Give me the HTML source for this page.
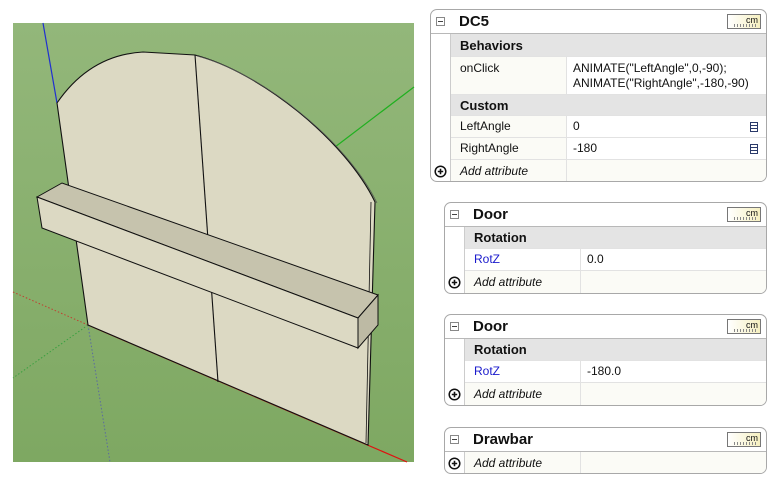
<!DOCTYPE html>
<html><head><meta charset="utf-8"><style>
*{margin:0;padding:0;box-sizing:border-box}
body{width:778px;height:485px;background:#fff;position:relative;overflow:hidden;font-family:"Liberation Sans",Arial,sans-serif;font-size:12px;color:#111}
.p{position:absolute;border:1px solid #a8a8a8;border-radius:7px;background:#fff;overflow:hidden}
.r{position:absolute;left:20px;right:0;border-bottom:1px solid #e2e2e2}
.hd{position:absolute;left:0;right:0;top:0;border-bottom:1px solid #b8b8b8}
.t{position:absolute;left:28px;font-weight:bold;font-size:15px}
.g{background:#e4e4e4;font-weight:bold;font-size:13px;padding-left:9px}
.c1{position:absolute;left:9px}
.c2{position:absolute;border-left:1px solid #e2e2e2;top:0;bottom:0;padding-left:6px}
.lc{background:#fbfbf6}
.cm{position:absolute;right:5px;width:34px;height:15px;border:1px solid #777;background:linear-gradient(90deg,#fff,#f6f0c0);font-size:9px;text-align:right;padding-right:2px;line-height:10px}
.cm:after{content:"";position:absolute;left:6px;right:2px;bottom:1px;height:3px;background:repeating-linear-gradient(90deg,#888 0 1px,transparent 1px 3px)}
.min{position:absolute;left:5px}
.plus{position:absolute;left:3px}
.gut{position:absolute;left:19px;width:1px;background:#ccc;bottom:0}
.i{font-style:italic}
.b{color:#1a1acc}
.ic{position:absolute;right:8px;top:6px;width:8px;height:10px;border:1.5px solid #2a3a6a;background:repeating-linear-gradient(180deg,#fff 0 2px,#2a3a6a 2px 3px)}
</style></head><body>
<svg width="0" height="0" style="position:absolute"><defs>
<symbol id="pl" viewBox="0 0 13 13"><circle cx="6.5" cy="6.5" r="5.3" fill="#fff" stroke="#111" stroke-width="1.5"/><path d="M3.8,6.5H9.2M6.5,3.8V9.2" stroke="#111" stroke-width="1.6"/></symbol>
<symbol id="mn" viewBox="0 0 9 9"><rect x="0.5" y="0.5" width="8" height="8" fill="#fff" stroke="#888"/><path d="M2,4.5H7" stroke="#444"/></symbol>
</defs></svg>
<svg width="778" height="485" style="position:absolute;left:0;top:0">
<defs><linearGradient id="bg" x1="0" y1="0" x2="0" y2="1"><stop offset="0" stop-color="#93b77a"/><stop offset="1" stop-color="#7ea862"/></linearGradient></defs>
<rect x="13" y="23" width="401" height="439" fill="url(#bg)"/>
<line x1="13" y1="292" x2="88" y2="325" stroke="#c04030" stroke-dasharray="1.5 2"/>
<line x1="88" y1="325" x2="13" y2="378" stroke="#3aa040" stroke-dasharray="1.5 2"/>
<line x1="88" y1="325" x2="110" y2="462" stroke="#5a6aa0" stroke-dasharray="1.5 2"/>
<line x1="43" y1="23" x2="57" y2="103" stroke="#2030d0" stroke-width="1.2"/>
<line x1="335" y1="147" x2="414" y2="87" stroke="#20b020" stroke-width="1.2"/>
<line x1="88" y1="325" x2="407" y2="462" stroke="#e01010" stroke-width="1.2"/>
<path d="M57,103 Q90,55 143,52 L195,55 C260,72 345,140 375,202 L368,445 L88,325 Z" fill="#dcd9c3" stroke="#111" stroke-width="1.1"/>
<path d="M197,56 C262,73 347,141 377,203" fill="none" stroke="#555" stroke-width="0.7"/>
<line x1="371" y1="202" x2="366" y2="443" stroke="#111" stroke-width="0.8"/>
<line x1="195" y1="55" x2="218" y2="382" stroke="#111" stroke-width="1.1"/>
<polygon points="37,197 62,183 378,295 358,318" fill="#c6c3ad" stroke="#111"/>
<polygon points="37,197 358,318 358,348 42,228" fill="#dcd9c3" stroke="#111"/>
<polygon points="358,318 378,295 378,325 358,348" fill="#bdbaa4" stroke="#111"/>
</svg>

<div class="p" style="left:430px;top:9px;width:337px;height:173px">
 <div class="gut" style="top:24px"></div>
 <div class="hd" style="height:24px"><svg class="min" style="top:7px" width="9" height="9"><use href="#mn"/></svg><div class="t" style="top:3px">DC5</div><div class="cm" style="top:4px">cm</div></div>
 <div class="r g" style="top:24px;height:23px;line-height:23px">Behaviors</div>
 <div class="r lc" style="top:47px;height:38px"><div class="c1" style="top:4px">onClick</div><div class="c2" style="left:115px;right:0;background:#fff;padding-top:4px;line-height:15px">ANIMATE("LeftAngle",0,-90);<br>ANIMATE("RightAngle",-180,-90)</div></div>
 <div class="r g" style="top:85px;height:21px;line-height:21px">Custom</div>
 <div class="r lc" style="top:106px;height:22px;line-height:21px"><div class="c1">LeftAngle</div><div class="c2" style="left:115px;right:0;background:#fff">0<div class="ic"></div></div></div>
 <div class="r lc" style="top:128px;height:22px;line-height:21px"><div class="c1">RightAngle</div><div class="c2" style="left:115px;right:0;background:#fff">-180<div class="ic"></div></div></div>
 <svg class="plus" style="top:155px" width="13" height="13"><use href="#pl"/></svg>
 <div class="r lc" style="top:150px;height:23px;line-height:22px;border:0"><div class="c1 i">Add attribute</div><div class="c2" style="left:115px;right:0"></div></div>
</div>

<div class="p" style="left:444px;top:202px;width:323px;height:92px">
 <div class="gut" style="top:24px"></div>
 <div class="hd" style="height:24px"><svg class="min" style="top:7px" width="9" height="9"><use href="#mn"/></svg><div class="t" style="top:3px">Door</div><div class="cm" style="top:4px">cm</div></div>
 <div class="r g" style="top:24px;height:22px;line-height:22px">Rotation</div>
 <div class="r" style="top:46px;height:22px;line-height:21px"><div class="c1 b">RotZ</div><div class="c2" style="left:115px;right:0">0.0</div></div>
 <svg class="plus" style="top:73px" width="13" height="13"><use href="#pl"/></svg>
 <div class="r lc" style="top:68px;height:23px;line-height:22px;border:0"><div class="c1 i">Add attribute</div><div class="c2" style="left:115px;right:0"></div></div>
</div>

<div class="p" style="left:444px;top:314px;width:323px;height:92px">
 <div class="gut" style="top:24px"></div>
 <div class="hd" style="height:24px"><svg class="min" style="top:7px" width="9" height="9"><use href="#mn"/></svg><div class="t" style="top:3px">Door</div><div class="cm" style="top:4px">cm</div></div>
 <div class="r g" style="top:24px;height:22px;line-height:22px">Rotation</div>
 <div class="r" style="top:46px;height:22px;line-height:21px"><div class="c1 b">RotZ</div><div class="c2" style="left:115px;right:0">-180.0</div></div>
 <svg class="plus" style="top:73px" width="13" height="13"><use href="#pl"/></svg>
 <div class="r lc" style="top:68px;height:23px;line-height:22px;border:0"><div class="c1 i">Add attribute</div><div class="c2" style="left:115px;right:0"></div></div>
</div>

<div class="p" style="left:444px;top:427px;width:323px;height:47px">
 <div class="gut" style="top:24px"></div>
 <div class="hd" style="height:24px"><svg class="min" style="top:7px" width="9" height="9"><use href="#mn"/></svg><div class="t" style="top:3px">Drawbar</div><div class="cm" style="top:4px">cm</div></div>
 <svg class="plus" style="top:29px" width="13" height="13"><use href="#pl"/></svg>
 <div class="r lc" style="top:24px;height:22px;line-height:22px;border:0"><div class="c1 i">Add attribute</div><div class="c2" style="left:115px;right:0"></div></div>
</div>
</body></html>
